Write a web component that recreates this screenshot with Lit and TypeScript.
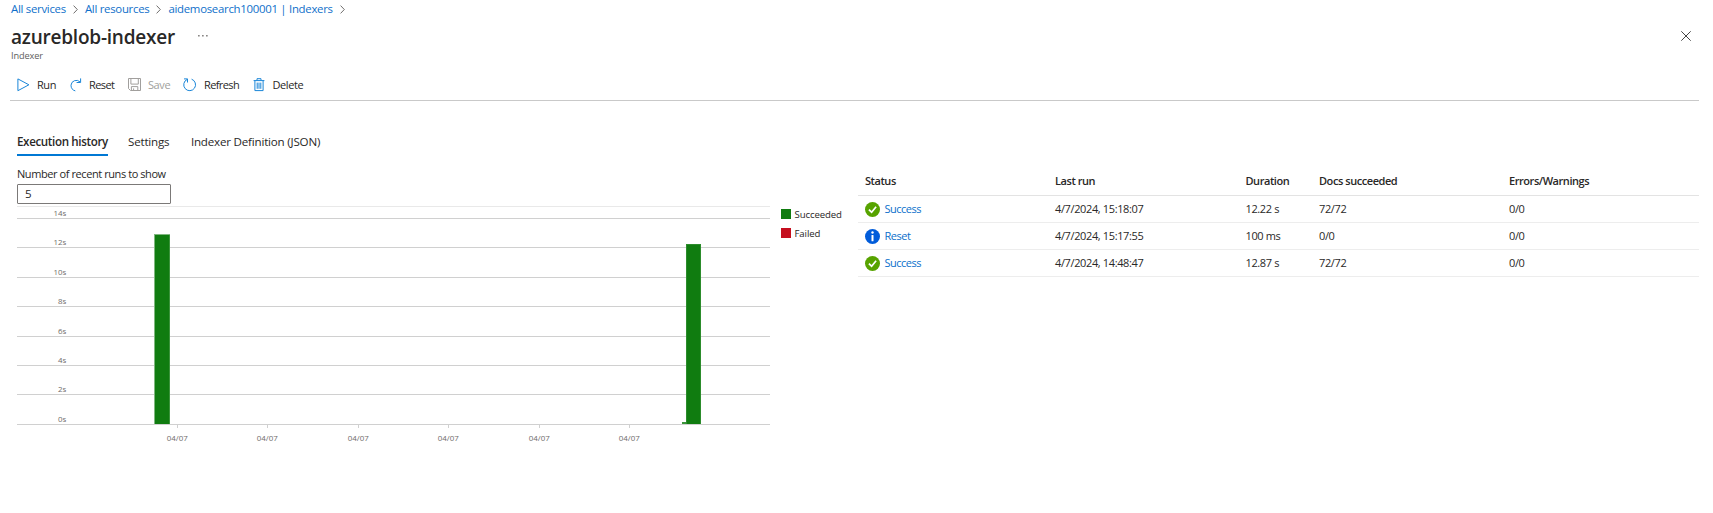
import { LitElement, html, css, svg } from "lit";
import { customElement } from "lit/decorators.js";

const chevron = html`<svg class="chev" viewBox="0 0 5 9"><path d="M.6 .6 4.3 4.5 .6 8.4" fill="none" stroke="#605e5c" stroke-width=".9"/></svg>`;

const icons = {
  run: svg`<path d="M.9 .9v11.8L11.9 6.8z"/>`,
  reset: svg`<path d="M5.3 12.9A5.9 5.9 0 0 1 1 7.2 5.3 5.3 0 0 1 10 3.9M10.6 .4v4.1H6.6"/>`,
  save: svg`<path d="M.5 .5h12v12h-10l-2-2zM2.9 .5v5.6h7.4V.5M3.4 12.5V8.6h6.4v3.9M5.6 10.4v2"/>`,
  refresh: svg`<path d="M4.2 1.4A5.9 5.9 0 1 0 8.6 1.2M1 .9h3.5v3.6"/>`,
  trash: svg`<path d="M.6 2.6h10.8M4 2.4V.7h4v1.7M1.9 2.8v9.8h8.2V2.8M4.2 4.6v6.2M6 4.6v6.2M7.8 4.6v6.2"/>`,
};

const runs = [
  { status: "Success", time: "4/7/2024, 15:18:07", duration: "12.22 s", docs: "72/72", errors: "0/0" },
  { status: "Reset", time: "4/7/2024, 15:17:55", duration: "100 ms", docs: "0/0", errors: "0/0" },
  { status: "Success", time: "4/7/2024, 14:48:47", duration: "12.87 s", docs: "72/72", errors: "0/0" },
];

@customElement("run-chart")
class RunChart extends LitElement {
  static styles = css`
    :host { display: block; }
    svg { display: block; }
    .axis { font: 7.9px "Open Sans", "Noto Sans", sans-serif; letter-spacing: 0; fill: #6e6c6a; }
  `;
  render() {
    const grid = [12, 41, 71, 100, 130, 159, 188, 218];
    const ticks = [160, 250, 341, 431, 522, 612];
    return html`<svg width="753" height="240" viewBox="0 0 753 240">
      <rect x="0" y="0" width="753" height="1" fill="#e9e9e9"/>
      ${grid.map((y, i) => svg`<rect x="0" y=${y} width="753" height="1" fill="#d0d0d0"/>
        <text class="axis" x="49.3" y=${y - 2} text-anchor="end">${14 - i * 2}s</text>`)}
      ${ticks.map((x) => svg`<rect x=${x} y="219" width="1" height="3" fill="#d0d0d0"/>
        <text class="axis" x=${x + 0.2} y="235.3" text-anchor="middle">04/07</text>`)}
      <rect x="137" y="28" width="16" height="190" fill="#7fb77f"/>
      <rect x="138" y="29" width="14.6" height="189" fill="#107c10"/>
      <rect x="665" y="216" width="4" height="2" fill="#3c943c"/>
      <rect x="669" y="38" width="15" height="180" fill="#2c8c2c"/>
      <rect x="670" y="39" width="13" height="179" fill="#107c10"/>
    </svg>`;
  }
}

@customElement("app-root")
class AppRoot extends LitElement {
  static styles = css`
    :host {
      display: block; box-sizing: border-box; width: 1713px; height: 513px; overflow: hidden;
      background: #fff; color: #292827; padding-left: 10px;
      font: 11px/14px "Open Sans", "Noto Sans", sans-serif; letter-spacing: -0.42px;
    }
    span { white-space: nowrap; }
    .crumbs { display: flex; align-items: center; height: 18px; color: #0f6fca; padding-left: 1px; font-size: 11.4px; letter-spacing: -0.28px; }
    .chev { width: 5px; height: 9px; margin: 1px 7px 0 7px; }
    .head { display: flex; align-items: center; height: 31px; padding: 5px 14px 0 1px; box-sizing: border-box; }
    .title { font-size: 19px; font-weight: 600; line-height: 26px; letter-spacing: -0.22px; padding-top: 1px; }
    .dots { margin-left: 23px; width: 10px; height: 2px; }
    .close { width: 10px; height: 10px; margin-left: auto; margin-right: 8px; }
    .sub { height: 14px; padding-left: 1px; font-size: 9.2px; letter-spacing: -0.1px; color: #605e5c; }
    .bar { display: flex; align-items: center; height: 38px; width: 1689px; padding-top: 7px; border-bottom: 1px solid #c9c9c9; box-sizing: border-box; }
    .cmd { display: flex; align-items: center; height: 14px; }
    .cmd svg { width: 14px; height: 14px; fill: none; stroke: #1a86d8; stroke-width: 1; overflow: visible; flex: none; }
    .cmd.off { color: #a19f9d; }
    .cmd.off svg { stroke: #a19f9d; }
    .c1 { width: 60px; padding-left: 7px; box-sizing: border-box; } .c2 { width: 58px; } .c3 { width: 55px; } .c4 { width: 70px; }
    .c1 span { margin-left: 6px; } .c2 span { margin-left: 5px; letter-spacing: -0.6px; } .c3 span { margin-left: 6px; }
    .c4 span { margin-left: 7px; letter-spacing: -0.6px; } .c5 span { margin-left: 5.5px; }
    .tabs { display: flex; padding: 35px 0 0 7px; height: 20px; font-size: 11.6px; letter-spacing: -0.2px; }
    .tab { height: 20px; line-height: 12px; border-bottom: 2px solid transparent; box-sizing: border-box; margin-right: 21.5px; }
    .tab.on { font-weight: 600; border-bottom-color: #0078d4; letter-spacing: -0.36px; width: 91px; margin-right: 20px; }
    .body { display: flex; }
    .left { padding: 11px 0 0 7px; width: 754px; }
    .label { display: block; height: 17px; line-height: 14px; }
    .input { box-sizing: border-box; width: 154px; height: 20px; border: 1px solid #7b7978; border-radius: 1px; padding: 2px 7px; font-size: 11.5px; }
    run-chart { margin-top: 2px; }
    .legend { width: 77px; padding: 53px 0 0 10px; font-size: 9.6px; letter-spacing: -0.1px; }
    .item { display: flex; align-items: center; height: 10px; margin-bottom: 9px; }
    .sw { width: 10px; height: 10px; margin-right: 3.5px; background: #107c10; }
    .item span { padding-top: 1px; }
    .sw.red { background: #c50f1f; }
    .table { width: 841px; padding-top: 11px; }
    .row { display: grid; grid-template-columns: 190px 190.5px 73.5px 190px 1fr; align-items: center;
      height: 27px; padding-left: 7px; box-sizing: border-box; border-bottom: 1px solid #ededed; letter-spacing: -0.37px; }
    .row.th { height: 29px; font-weight: 600; letter-spacing: -0.44px; border-bottom-color: #e3e3e3; }
    .status { display: flex; align-items: center; color: #0b6fcb; letter-spacing: -0.5px; }
    .status svg { width: 15px; height: 15px; margin-right: 4.5px; }
  `;

  cmd(cls: string, icon: unknown, label: string) {
    return html`<div class="cmd ${cls}"><svg viewBox="0 0 14 14">${icon}</svg><span>${label}</span></div>`;
  }

  render() {
    return html`
      <div class="crumbs"><span>All services</span>${chevron}<span>All resources</span>${chevron}<span>aidemosearch100001 | Indexers</span>${chevron}</div>
      <div class="head">
        <span class="title">azureblob-indexer</span>
        <svg class="dots" viewBox="0 0 10 2"><g fill="#8a8886"><rect x="0" width="1.7" height="1.5"/><rect x="4" width="1.7" height="1.5"/><rect x="8" width="1.7" height="1.5"/></g></svg>
        <svg class="close" viewBox="0 0 10 10"><path d="M.3 .3 9.7 9.7M9.7 .3 .3 9.7" stroke="#444" fill="none"/></svg>
      </div>
      <div class="sub"><span>Indexer</span></div>
      <div class="bar">
        ${this.cmd("c1", icons.run, "Run")}
        ${this.cmd("c2", icons.reset, "Reset")}
        ${this.cmd("c3 off", icons.save, "Save")}
        ${this.cmd("c4", icons.refresh, "Refresh")}
        ${this.cmd("c5", icons.trash, "Delete")}
      </div>
      <div class="tabs">
        <span class="tab on">Execution history</span><span class="tab">Settings</span><span class="tab">Indexer Definition (JSON)</span>
      </div>
      <div class="body">
        <div class="left">
          <div class="label"><span>Number of recent runs to show</span></div>
          <div class="input"><span>5</span></div>
          <run-chart></run-chart>
        </div>
        <div class="legend">
          <div class="item"><i class="sw"></i><span>Succeeded</span></div>
          <div class="item"><i class="sw red"></i><span>Failed</span></div>
        </div>
        <div class="table">
          <div class="row th"><span>Status</span><span>Last run</span><span>Duration</span><span>Docs succeeded</span><span>Errors/Warnings</span></div>
          ${runs.map((r) => html`<div class="row">
            <div class="status">
              <svg viewBox="0 0 15 15">${r.status === "Reset"
                ? svg`<circle cx="7.5" cy="7.5" r="7.5" fill="#015cda"/><rect x="6.5" y="6" width="2" height="6.3" rx=".6" fill="#fff"/><circle cx="7.5" cy="3.5" r="1.2" fill="#fff"/>`
                : svg`<circle cx="7.5" cy="7.5" r="7.5" fill="#57a300"/><path d="M3.9 7.6 6.6 10.2 11.1 4.7" fill="none" stroke="#fff" stroke-width="1.7"/>`}</svg>
              <span>${r.status}</span>
            </div>
            <span>${r.time}</span><span>${r.duration}</span><span>${r.docs}</span><span>${r.errors}</span>
          </div>`)}
        </div>
      </div>`;
  }
}
